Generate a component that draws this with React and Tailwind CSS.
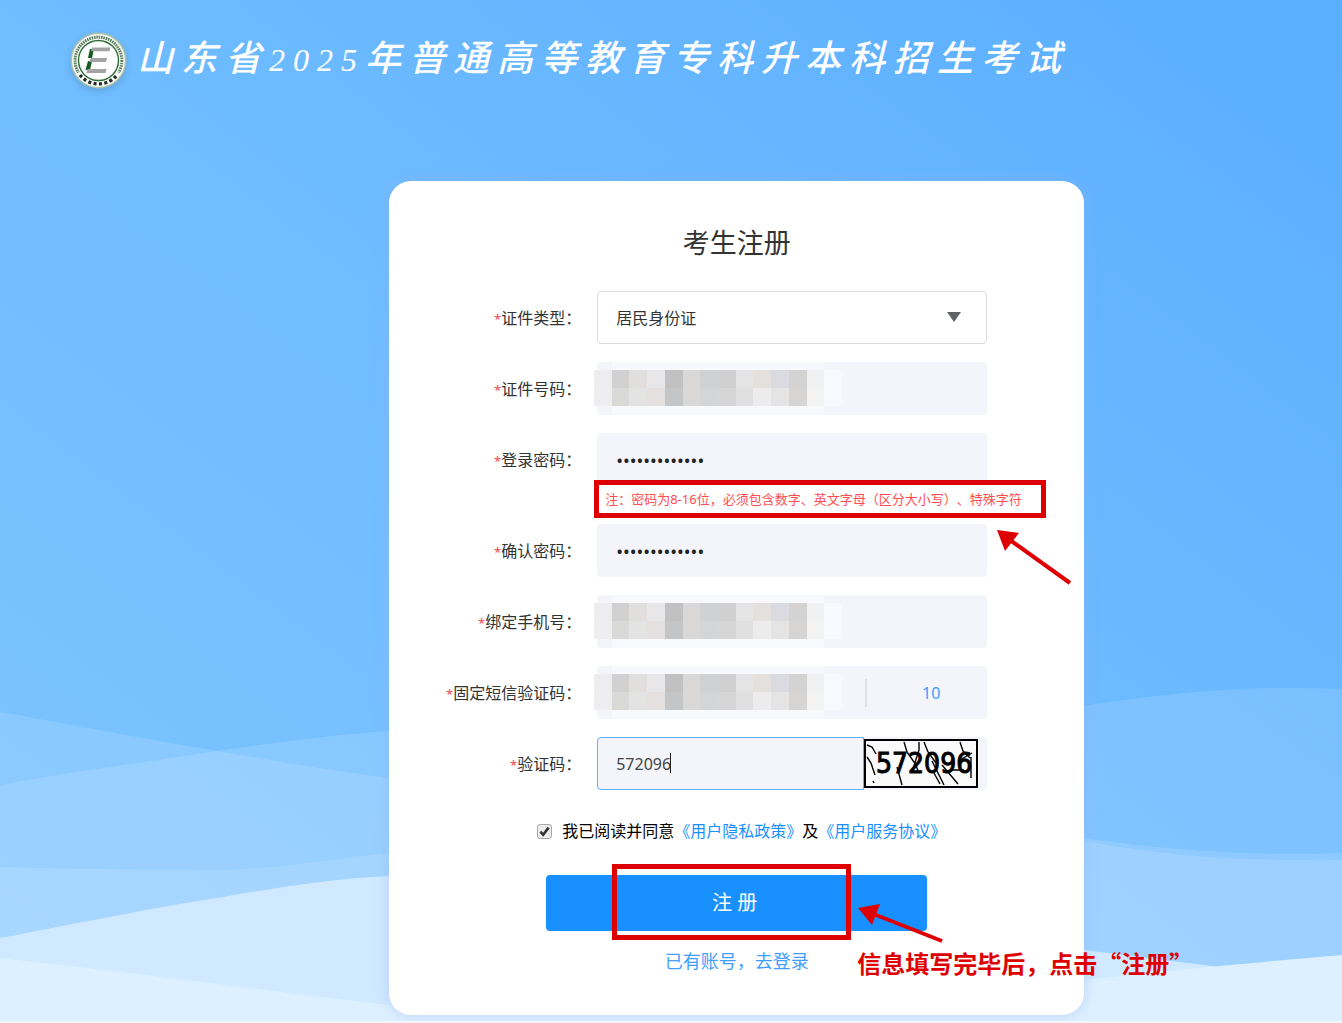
import { useState } from "react";

// Soft white layers along the bottom of the page
function Waves() {
  return (
    <svg
      className="pointer-events-none absolute inset-x-0 bottom-0 h-[341px] w-full"
      viewBox="0 680 1342 341"
      preserveAspectRatio="none"
      aria-hidden="true"
    >
      <path
        d="M0 712 C80 726 140 738 217 751 C280 762 330 770 389 778 C640 806 880 800 1084 838 C1180 852 1260 856 1342 853 V1021 H0 Z"
        fill="#fff"
        fillOpacity="0.13"
      />
      <path
        d="M0 785 C80 770 150 762 217 751 C280 742 330 735 389 731 C680 716 860 800 1084 841 C1180 859 1260 861 1342 860 V1021 H0 Z"
        fill="#fff"
        fillOpacity="0.13"
      />
      <path
        d="M0 867 C80 869 150 870 230 870 C290 867 340 859 389 853 C640 810 860 736 1084 706 C1170 693 1240 685 1342 689 V1021 H0 Z"
        fill="#fff"
        fillOpacity="0.12"
      />
      <path
        d="M0 938 C80 923 140 910 217 898 C280 887 330 879 389 876 C650 864 860 916 1084 950 L1220 967 L1342 990 V1021 H0 Z"
        fill="#d0e9ff"
      />
      <path
        d="M0 958 C130 972 260 990 389 1005 C620 1024 860 1000 1084 980 C1170 970 1250 963 1342 955 V1021 H0 Z"
        fill="#ddf0ff"
      />
    </svg>
  );
}

function Logo() {
  return (
    <svg className="size-[57px] shrink-0 drop-shadow-md" viewBox="0 0 57 57" aria-hidden="true">
      <circle cx="28.5" cy="28.5" r="28" fill="#a9bfa6" />
      <circle cx="28.5" cy="28.5" r="26.5" fill="#f7faf6" />
      <circle cx="28.5" cy="28.5" r="23.4" fill="none" stroke="#5c7f60" strokeWidth="3" strokeDasharray="1.6 0.8" pathLength="147" />
      <path d="M8.5 40.5 A23.4 23.4 0 0 0 48.5 40.5" fill="none" stroke="#f7faf6" strokeWidth="4.6" />
      <path d="M10 43 A23.6 23.6 0 0 0 47 43" fill="none" stroke="#252b28" strokeWidth="3.2" strokeDasharray="3 2.4" />
      <circle cx="28.5" cy="28.5" r="20" fill="#fdfdfd" stroke="#2f6b38" strokeWidth="1.4" />
      <path d="M20 17 H24 L22 26 H18 Z" fill="#14591f" />
      <path d="M18 29 H22 L20 38 H15.5 Z" fill="#14591f" />
      <path d="M22 15.5 H40.5 L39.5 19.3 H21 Z" fill="#a3a3a3" />
      <path d="M21 26 H37 L36 30 H18.5 Z" fill="#a3a3a3" />
      <path d="M17.5 37 H36.5 L35.5 41 H16.5 Z" fill="#a3a3a3" />
    </svg>
  );
}

const mosaicTop = [
  "#ededf0", "#d0d1d0", "#e0dfdd", "#e7e7e9", "#c0c1c0", "#d9d8d7", "#d0d1d3",
  "#d0d0d0", "#e4e4e4", "#e4e0dd", "#d9dbe0", "#d4d3d2", "#f0f1f2", "#f8f9fc",
];
const mosaicBottom = [
  "#eeeef1", "#d9d9d7", "#e3e3e3", "#e3e0df", "#c3c5c7", "#d9d8d6", "#d3d5d7",
  "#d7d6d7", "#e0e0e0", "#ececec", "#e4e4e4", "#d6d5d4", "#f3f3f4", "#f8f9fc",
];

// Pixelated cover for personal values
function Mosaic() {
  return (
    <svg
      className="pointer-events-none absolute inset-y-0 -left-[3px] h-full w-[248px]"
      viewBox="0 0 14 53"
      preserveAspectRatio="none"
      shapeRendering="crispEdges"
      aria-hidden="true"
    >
      <rect x="1" y="0" width="12" height="53" fill="#f8f9fc" />
      {mosaicTop.map((fill, i) => (
        <rect key={i} x={i} y="8" width="1" height="18" fill={fill} />
      ))}
      {mosaicBottom.map((fill, i) => (
        <rect key={i} x={i} y="26" width="1" height="18" fill={fill} />
      ))}
    </svg>
  );
}

function Row({ id, label, children }) {
  return (
    <div className="grid grid-cols-[192px_390px] items-center gap-4">
      <label htmlFor={id} className="text-right text-base whitespace-nowrap text-[#333]">
        <span className="text-[13px] text-[#f5474f]">*</span>
        {label}：
      </label>
      <div className="relative flex h-[53px] rounded bg-[#f4f5fa]">{children}</div>
    </div>
  );
}

const inputClass =
  "h-full min-w-0 flex-1 rounded bg-transparent px-[19px] text-base text-[#333] outline-none";
const passwordClass =
  "h-full min-w-0 flex-1 rounded bg-transparent px-[19px] text-lg text-[#222] outline-none";

function Captcha() {
  return (
    <div className="relative my-auto mr-[9px] flex h-[49px] w-[114px] items-center justify-end overflow-hidden border-2 border-black bg-[#fafafa] pr-1">
      <span className="font-['DejaVu_Sans_Condensed','DejaVu_Sans',sans-serif] text-[28px] leading-none text-black [-webkit-text-stroke:1px_#000]">
        572096
      </span>
      <svg
        className="absolute inset-0 size-full"
        viewBox="0 0 110 45"
        fill="none"
        stroke="#000"
        strokeWidth="1.4"
        aria-hidden="true"
      >
        <path d="M1 4 L6 6 L10 13 M1 16 L5 22 L9 34 M7 40 L8 42" />
        <path d="M38 1 L41 11 L50 24 L52 30 M31 26 L36 44 M53 1 V9 L47 28" />
        <path d="M58 1 L62 11 L70 22 M66 20 L78 44 M68 32 L74 43" />
        <path d="M94 1 L97 10 L104 17 M76 24 L92 43 M86 29 H98 M105 16 V37 M92 20 L106 12" />
      </svg>
    </div>
  );
}

export default function App() {
  const [password, setPassword] = useState("Abcd@12345678");
  const [confirm, setConfirm] = useState("Abcd@12345678");
  const [code, setCode] = useState("572096");
  const [agreed, setAgreed] = useState(true);

  return (
    <div className="relative min-h-screen overflow-hidden border-b-2 border-[#f4f5f8] bg-linear-to-bl from-[#5aaeff] via-[#6fbcff] to-[#7ec5ff] pb-[6px] font-['Noto_Sans','Noto_Sans_CJK_SC',sans-serif]">
      <Waves />

      <header className="relative flex items-center gap-[10px] px-[70px] pt-[31px]">
        <Logo />
        <h1 className="font-['Liberation_Serif','Noto_Sans_CJK_SC',serif] text-[36px] leading-[57px] font-medium tracking-[8px] whitespace-nowrap text-white italic">
          山东省<span className="text-[32px]">2025</span>年普通高等教育专科升本科招生考试
        </h1>
      </header>

      <main className="relative mt-[92px] ml-[29%] w-[695px] rounded-[22px] bg-white pt-[42px] pb-[42px] shadow-[0_0_14px_rgba(150,178,240,0.45)]">
        <h2 className="text-center text-[27px] leading-10 text-[#333]">考生注册</h2>

        <form className="mt-7" onSubmit={(e) => e.preventDefault()}>
          <div className="flex flex-col gap-[18px]">
            <Row id="idType" label="证件类型">
              <select
                id="idType"
                className="h-full w-full appearance-none rounded border border-[#dcdcdc] bg-white px-[18px] text-base text-[#333] outline-none"
              >
                <option>居民身份证</option>
              </select>
              <svg
                className="pointer-events-none absolute top-[21px] right-[26px] h-[10px] w-[14px]"
                viewBox="0 0 14 10"
                aria-hidden="true"
              >
                <path d="M0 0 H14 L7 10 Z" fill="#606266" />
              </svg>
            </Row>

            <Row id="idNumber" label="证件号码">
              <input id="idNumber" className={inputClass} />
              <Mosaic />
            </Row>

            <div>
              <Row id="password" label="登录密码">
                <input
                  id="password"
                  type="password"
                  value={password}
                  onChange={(e) => setPassword(e.target.value)}
                  className={passwordClass}
                />
              </Row>
              {/* Password rule, boxed in red */}
              <div className="relative z-10 -mt-[6px] -mb-3 ml-[205px] h-[38px] w-[452px] border-[5px] border-[#de0000] bg-white px-[6px] text-[13px] leading-7 whitespace-nowrap text-[#ff4d4f] [text-spacing-trim:space-all]">
                注：密码为8-16位，必须包含数字、英文字母（区分大小写）、特殊字符
                <svg
                  className="pointer-events-none absolute top-[45px] left-[397px] h-[56px] w-[76px]"
                  viewBox="0 0 76 56"
                  aria-hidden="true"
                >
                  <path d="M14 10 L74 53" stroke="#de0000" strokeWidth="4" />
                  <path d="M1 0 L23 3 L9 21 Z" fill="#de0000" />
                </svg>
              </div>
            </div>

            <Row id="confirm" label="确认密码">
              <input
                id="confirm"
                type="password"
                value={confirm}
                onChange={(e) => setConfirm(e.target.value)}
                className={passwordClass}
              />
            </Row>

            <Row id="phone" label="绑定手机号">
              <input id="phone" className={inputClass} />
              <Mosaic />
            </Row>

            <Row id="smsCode" label="固定短信验证码">
              <input id="smsCode" className={inputClass} />
              <Mosaic />
              <button
                type="button"
                className="my-auto h-7 w-[122px] border-l-2 border-[#dfe0e6] pl-2 text-base text-[#409eff]"
              >
                10
              </button>
            </Row>

            <Row id="captcha" label="验证码">
              <div className="relative flex-1">
                <input
                  id="captcha"
                  value={code}
                  onChange={(e) => setCode(e.target.value)}
                  className="h-full w-full rounded-l border border-[#5cb3ff] px-[18px] text-base text-[#444] outline-none"
                />
                <span className="absolute top-4 left-[73px] h-5 w-px bg-[#222]" />
              </div>
              <Captcha />
            </Row>
          </div>

          <div className="mt-[29px] ml-[148px] flex h-6 items-center gap-[10px] text-base whitespace-nowrap">
            <span className="relative flex">
              <input
                id="agree"
                type="checkbox"
                checked={agreed}
                onChange={(e) => setAgreed(e.target.checked)}
                className="size-[15px] appearance-none rounded-[3px] border border-[#a8a8a8] bg-[#ececec]"
              />
              {agreed && (
                <svg
                  className="pointer-events-none absolute inset-0 size-[15px]"
                  viewBox="0 0 15 15"
                  fill="none"
                  stroke="#333"
                  strokeWidth="2.6"
                  aria-hidden="true"
                >
                  <path d="M3.4 7.6 L6.2 10.8 L11.6 3.6" />
                </svg>
              )}
            </span>
            <p className="text-black">
              <label htmlFor="agree">我已阅读并同意</label>
              <a href="#privacy" className="text-[#1890ff]">《用户隐私政策》</a>
              及
              <a href="#service" className="text-[#1890ff]">《用户服务协议》</a>
            </p>
          </div>

          <div className="relative mx-auto mt-8 w-[381px]">
            <button
              type="submit"
              className="h-[56px] w-full rounded bg-[#1890ff] pr-1 text-xl text-white"
            >
              注 册
            </button>
            {/* Highlight, arrow and hint around the submit button */}
            <div className="pointer-events-none absolute -top-[11px] left-[66px] h-[76px] w-[239px] border-[5px] border-[#de0000]" />
            <svg
              className="pointer-events-none absolute top-[28px] left-[311px] h-[42px] w-[88px]"
              viewBox="0 0 88 42"
              aria-hidden="true"
            >
              <path d="M14 10 L85 38" stroke="#de0000" strokeWidth="4" />
              <path d="M1 5 L23 1 L15 22 Z" fill="#de0000" />
            </svg>
            <p className="absolute top-[70px] left-[311px] font-['Noto_Sans_CJK_SC',sans-serif] text-2xl leading-9 font-bold whitespace-nowrap text-[#de0000]">
              信息填写完毕后，点击“注册”
            </p>
          </div>

          <div className="mt-[18px] text-center text-lg leading-6">
            <a href="#login" className="text-[#409eff]">已有账号，去登录</a>
          </div>
        </form>
      </main>
    </div>
  );
}
